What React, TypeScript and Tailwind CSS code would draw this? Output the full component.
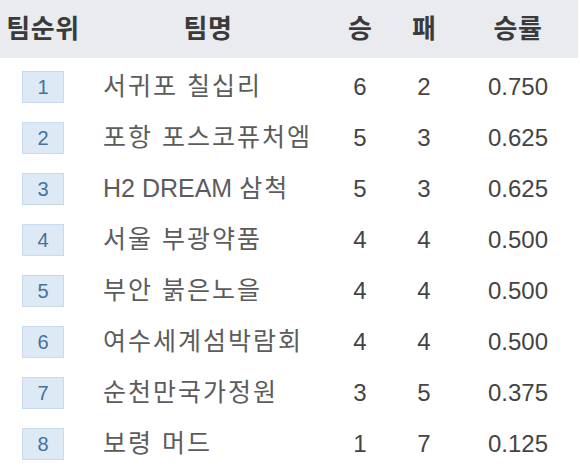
import React from "react";

const rows = [
  { r: 1, name: "서귀포 칠십리", w: 6, l: 2, p: "0.750" },
  { r: 2, name: "포항 포스코퓨처엠", w: 5, l: 3, p: "0.625" },
  { r: 3, name: "H2 DREAM 삼척", w: 5, l: 3, p: "0.625" },
  { r: 4, name: "서울 부광약품", w: 4, l: 4, p: "0.500" },
  { r: 5, name: "부안 붉은노을", w: 4, l: 4, p: "0.500" },
  { r: 6, name: "여수세계섬박람회", w: 4, l: 4, p: "0.500" },
  { r: 7, name: "순천만국가정원", w: 3, l: 5, p: "0.375" },
  { r: 8, name: "보령 머드", w: 1, l: 7, p: "0.125" },
];

const cols = "grid grid-cols-[86px_244px_60px_68px_120px]";

function Name({ text }: { text: string }) {
  const parts = text.split(/([가-힣]+(?: [가-힣]+)*)/).filter((s) => s.length > 0);
  return (
    <>
      {parts.map((p, i) =>
        /[가-힣]/.test(p) ? (
          <span key={i} className="tracking-[2px]">
            {p}
          </span>
        ) : (
          <span key={i}>{p}</span>
        )
      )}
    </>
  );
}

export default function App() {
  return (
    <div
      className="w-[580px] h-[467px] bg-white overflow-hidden"
      style={{ fontFamily: '"Liberation Sans", "Noto Sans CJK KR", sans-serif' }}
    >
      <div className={`${cols} h-[58px] items-center bg-[#e9ebef] text-[26px] font-bold text-[#3a3a3a] mr-[2px]`}>
        <div className="text-center tracking-[0.5px]">팀순위</div>
        <div className="text-center tracking-[0.5px]">팀명</div>
        <div className="text-center">승</div>
        <div className="text-center">패</div>
        <div className="text-center tracking-[0.5px]">승률</div>
      </div>
      <div className="pt-[3px]">
        {rows.map((row) => (
          <div key={row.r} className={`${cols} h-[51px] items-center`}>
            <div className="flex justify-center">
              <div className="w-[42px] h-[32px] bg-[#dde9f5] border border-[#c8dbee] flex items-center justify-center text-[20px] text-[#44729f]">
                {row.r}
              </div>
            </div>
            <div className="pl-[17px] text-[25px] text-[#5c5c5c] whitespace-nowrap">
              <Name text={row.name} />
            </div>
            <div className="text-center text-[24px] text-[#444]">{row.w}</div>
            <div className="text-center text-[24px] text-[#444]">{row.l}</div>
            <div className="text-center text-[24px] text-[#444]">{row.p}</div>
          </div>
        ))}
      </div>
    </div>
  );
}
